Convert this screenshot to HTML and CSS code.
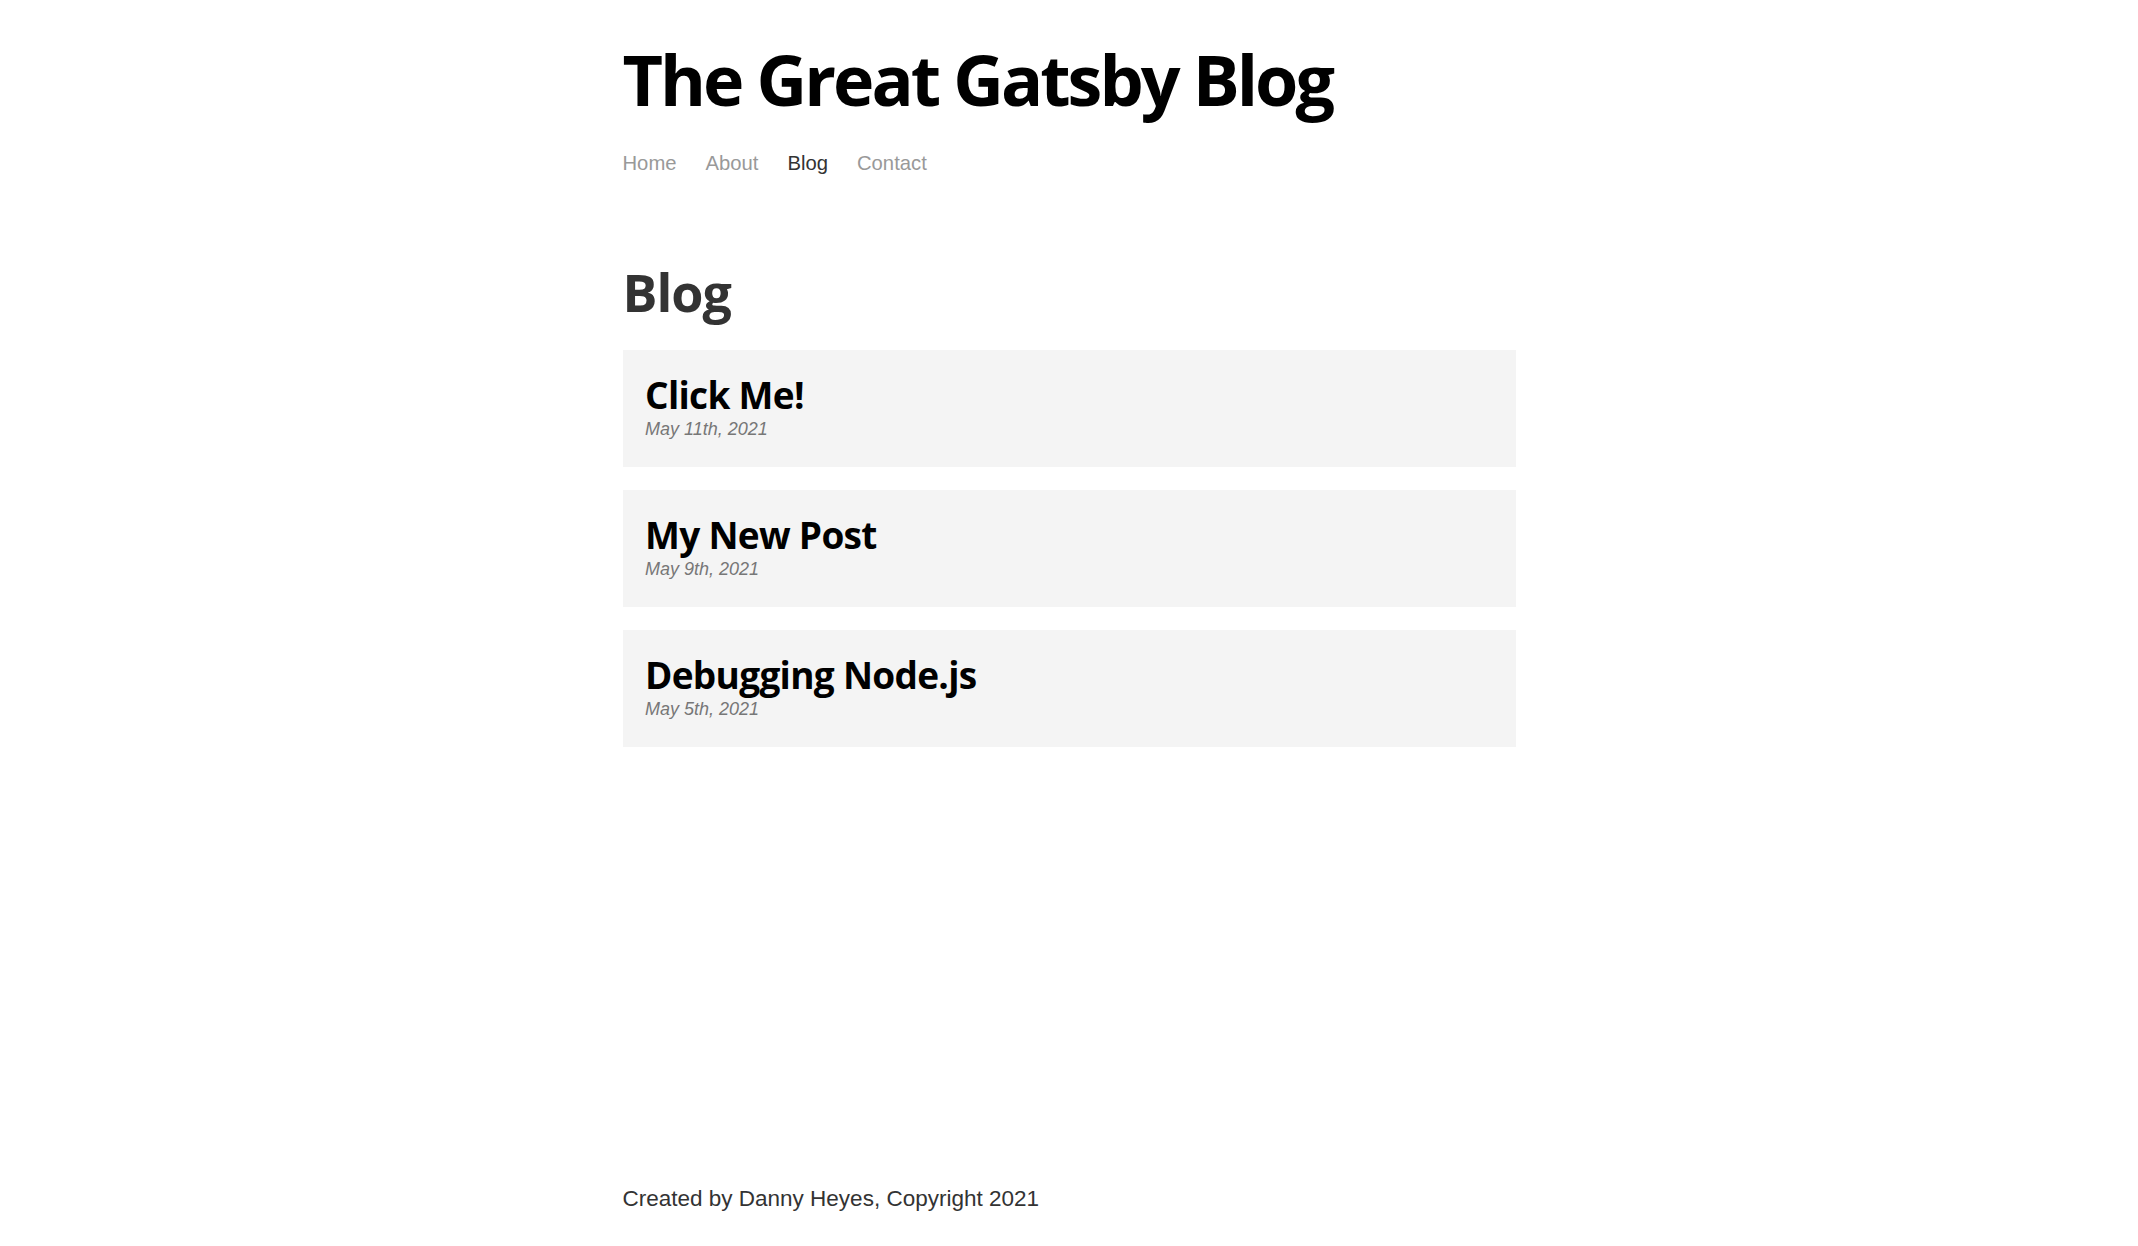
FILE: index.html
```html
<!DOCTYPE html>
<html lang="en">
<head>
<meta charset="utf-8">
<title>Blog | The Great Gatsby Blog</title>
<link rel="stylesheet" href="styles.css">
</head>
<body>
<div class="container">
  <div class="content">
    <header class="header">
      <h1><a class="title" href="#">The Great Gatsby Blog</a></h1>
      <nav>
        <ul class="nav-list">
          <li><a class="nav-item" href="#">Home</a></li>
          <li><a class="nav-item" href="#">About</a></li>
          <li><a class="nav-item active-nav-item" href="#">Blog</a></li>
          <li><a class="nav-item" href="#">Contact</a></li>
        </ul>
      </nav>
    </header>
    <main>
      <h1 class="page-title">Blog</h1>
      <ol class="posts">
        <li class="post"><a class="post-link" href="#"><h2 class="post-title">Click Me!</h2><p class="post-date">May 11th, 2021</p></a></li>
        <li class="post"><a class="post-link" href="#"><h2 class="post-title">My New Post</h2><p class="post-date">May 9th, 2021</p></a></li>
        <li class="post"><a class="post-link" href="#"><h2 class="post-title">Debugging Node.js</h2><p class="post-date">May 5th, 2021</p></a></li>
      </ol>
    </main>
  </div>
  <footer class="footer">
    <p>Created by Danny Heyes, Copyright 2021</p>
  </footer>
</div>
</body>
</html>
```
FILE: styles.css
```css
* { box-sizing: border-box; }
html, body { margin: 0; padding: 0; background: #fff; }
body {
  color: #333;
  font-family: "Liberation Sans", Arial, sans-serif;
  font-size: 22.5px;
}
.container {
  width: 893px;
  margin: 0 auto;
  min-height: 100vh;
  display: flex;
  flex-direction: column;
  padding: 37px 0 34px;
}
.content { flex-grow: 1; }
.header h1 { margin: 0; font-size: 70px; line-height: 84px; font-family: "Open Sans", sans-serif; font-weight: 700; letter-spacing: -3px; }
.title { color: #000; text-decoration: none; }
.nav-list { display: flex; list-style: none; margin: 30px 0 0; padding: 0; line-height: 24px; }
.nav-item { color: #999; font-size: 20.25px; margin-right: 29px; text-decoration: none; }
.active-nav-item { color: #333; }
.page-title {
  margin: 86px 0 0;
  font-family: "Open Sans", sans-serif;
  font-weight: 700;
  font-size: 52px;
  line-height: 62px;
  color: #333;
  letter-spacing: -1px;
}
.posts { list-style: none; margin: 27px 0 0; padding: 0; display: flex; flex-direction: column; gap: 23px; }
.post-link {
  display: block;
  background: #f4f4f4;
  color: #000;
  text-decoration: none;
  padding: 23px 22.5px 27px;
}
.post-title {
  margin: 0;
  font-family: "Open Sans", sans-serif;
  font-weight: 700;
  font-size: 37px;
  line-height: 44px;
  letter-spacing: -0.7px;
}
.post-date {
  margin: 2px 0 0;
  color: #777;
  font-size: 18px;
  line-height: 21px;
  font-style: italic;
}
.footer p { margin: 0; line-height: 26px; color: #333; }
```
